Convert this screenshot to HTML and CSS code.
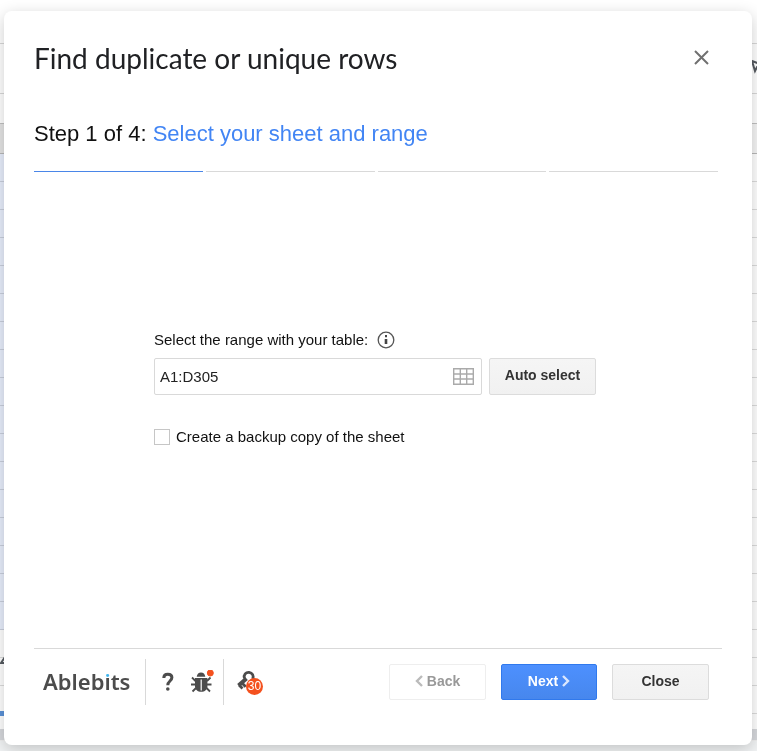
FILE: index.html
```
<!DOCTYPE html>
<html lang="en">
<head>
  <meta charset="UTF-8">
  <title>Find duplicate or unique rows</title>
  <link rel="stylesheet" href="styles.css">
</head>
<body>

  <!-- Spreadsheet behind the dialog -->
  <div class="sheet" aria-hidden="true">
    <div class="sheet-top"></div>
    <div class="sheet-toolbar">
      <svg class="cursor" width="14" height="18" viewBox="0 0 14 18" fill="none" stroke="#555a60" stroke-width="2"><path d="M1 2l3 10 2-4 6-2z"/></svg>
    </div>
    <div class="sheet-formula"></div>
    <div class="sheet-columns"></div>
    <div class="sheet-rows">
      <div class="sheet-selection"></div>
    </div>
    <div class="sheet-scroll"></div>
    <div class="sheet-tabs"></div>
    <svg class="sheet-pen" width="5" height="12" viewBox="0 0 5 12" fill="none" stroke="#555a60" stroke-width="2"><path d="M5 1L1 7h4"/></svg>
    <div class="sheet-mark"></div>
  </div>

  <!-- Dialog -->
  <div class="dialog" role="dialog" aria-labelledby="dialogTitle">
    <header class="dialog-header">
      <h1 class="dialog-title" id="dialogTitle">Find duplicate or unique rows</h1>
      <button class="close-icon" type="button" aria-label="Close dialog">
        <svg width="15" height="15" viewBox="0 0 15 15" stroke="#707070" stroke-width="2"><path d="M1 1l13 13M14 1L1 14"/></svg>
      </button>
    </header>

    <main class="dialog-body">
      <h2 class="step-title">Step 1 of 4: <span class="step-name">Select your sheet and range</span></h2>
      <div class="steps">
        <span class="step active"></span>
        <span class="step"></span>
        <span class="step"></span>
        <span class="step"></span>
      </div>

      <form class="range-form">
        <div class="label-row">
          <label for="rangeInput">Select the range with your table:</label>
          <svg width="18" height="18" viewBox="0 0 18 18"><circle cx="9" cy="9" r="7.8" fill="none" stroke="#555" stroke-width="1.3"/><path d="M8 4h2v2.2H8zM7.7 8h2.6v5H7.7z" fill="#444"/></svg>
        </div>
        <div class="range-row">
          <div class="range-box">
            <input class="range-input" type="text" id="rangeInput" value="A1:D305">
            <button class="grid-button" type="button" aria-label="Select data range">
              <svg width="21" height="17" viewBox="0 0 21 17" fill="none" stroke="#aaa" stroke-width="1.4"><path d="M.7.7h19.6v15.6H.7zM.7 6h19.6M.7 11h19.6M7.3.7v15.6M13.7.7v15.6"/></svg>
            </button>
          </div>
          <button class="button auto-select" type="button">Auto select</button>
        </div>
        <label class="backup-row">
          <input class="checkbox" type="checkbox">
          Create a backup copy of the sheet
        </label>
      </form>
    </main>

    <footer class="dialog-footer">
      <a class="logo" href="#">Ableb<span class="logo-i">i</span>ts</a>
      <div class="tools">
        <button class="tool" type="button" aria-label="Help">
          <svg width="14" height="20" viewBox="0 0 14 20" fill="none" stroke="#4c4c4c" stroke-width="3"><path d="M2.8 6C2.8 3.4 4.3 2.2 6.8 2.2c2.6 0 4.1 1.3 4.1 3.4 0 3.5-4.1 3.4-4.1 7.6"/><circle cx="6.8" cy="17" r="1.8" fill="#4c4c4c" stroke="none"/></svg>
        </button>
        <button class="tool" type="button" aria-label="Report a problem">
          <svg width="24" height="24" viewBox="0 0 24 24"><path d="M5.7 6.8C6 4 7.8 2.5 10 2.5s4 1.5 4.3 4.3z" fill="#4c4c4c"/><path d="M4 8h12.4v8.5c0 3-2.6 5.3-6.2 5.3S4 19.5 4 16.500z" fill="#4c4c4c"/><path d="M10.2 9.5v11" stroke="#fff" stroke-width="1.2"/><path d="M4.5 11L1 7.5M16 11l3.5-3.5M4.5 14.5H0M16 14.5h4.500M5 18l-3.5 3.5M15.5 18l3.5 3.5" stroke="#4c4c4c" stroke-width="1.8"/><circle cx="19.3" cy="3" r="3" fill="#f4511e" stroke="#f4511e"/></svg>
        </button>
      </div>
      <button class="tool license" type="button" aria-label="License, 30 days left">
        <svg width="20" height="24" viewBox="0 0 20 24" fill="none" stroke="#4c4c4c"><path d="M7.4 8.2a4.5 4.5 0 1 1 8.2.8" stroke-width="2.8"/><path d="M9.5 8.5L1.5 15.500" stroke-width="4"/><path d="M5.5 13.5l3.2 3.200M2 15l3.500 3.500" stroke-width="2.8"/></svg>
        <span class="badge">30</span>
      </button>

      <div class="actions">
        <button class="button back" type="button" disabled>
          <svg width="8" height="12" viewBox="0 0 8 12" fill="none" stroke="#bbb" stroke-width="2.4"><path d="M7 1L2 6l5 5"/></svg>
          Back
        </button>
        <button class="button next" type="button">
          Next
          <svg width="8" height="12" viewBox="0 0 8 12" fill="none" stroke="#dbe7fd" stroke-width="2.4"><path d="M1 1l5 5-5 5"/></svg>
        </button>
        <button class="button" type="button">Close</button>
      </div>
    </footer>
  </div>

</body>
</html>
```

FILE: styles.css
```
* {
  box-sizing: border-box;
}

body {
  margin: 0;
  padding: 11px 5px 6px 4px;
  min-height: 100vh;
  display: flex;
  font-family: "Liberation Sans", Arial, sans-serif;
  font-size: 15px;
  color: #111;
}

/* Spreadsheet */
.sheet {
  position: fixed;
  inset: 0;
  z-index: -1;
  display: flex;
  flex-direction: column;
  overflow: hidden;
}

.sheet-top,
.sheet-toolbar,
.sheet-formula,
.sheet-columns {
  flex: none;
  border-bottom: 1px solid #d8d8d8;
}

.sheet-top {
  height: 44px;
}

.sheet-toolbar {
  display: flex;
  justify-content: flex-end;
  height: 50px;
  padding-top: 15px;
}

.cursor {
  margin-right: -8px;
}

.sheet-formula {
  height: 30px;
  border-color: #c0c0c0;
}

.sheet-columns {
  height: 30px;
  background: linear-gradient(to right, #e4e4e4 50%, #f5f5f5 50%);
  border-color: #b8b8b8;
}

.sheet-rows {
  flex: 1;
  background: repeating-linear-gradient(#fff 0 27px, #dcdcdc 27px 28px);
}

.sheet-selection {
  width: 50%;
  height: 476px;
  background: rgba(80, 120, 230, 0.13);
}

.sheet-scroll {
  height: 11px;
  background: #d6d8dc;
}

.sheet-tabs {
  height: 11px;
  border-top: 1px solid #eee;
  background: #f1f3f4;
}

.sheet-pen {
  position: absolute;
  left: 0;
  bottom: 83px;
}

.sheet-mark {
  position: absolute;
  left: 0;
  bottom: 35px;
  width: 40px;
  height: 5px;
  background: #5b92d8;
}

/* Dialog */
.dialog {
  flex: 1;
  display: flex;
  flex-direction: column;
  background: #fff;
  border-radius: 8px;
  box-shadow: 0 4px 16px rgba(0, 0, 0, 0.2);
}

.dialog-header {
  display: flex;
  align-items: center;
  justify-content: space-between;
  padding: 30px 41px 0 30px;
}

.dialog-title {
  margin: 0;
  font-family: "Google Sans", Lato, sans-serif;
  font-size: 28px;
  font-weight: 400;
  line-height: 34px;
  color: #202124;
}

.close-icon,
.tool,
.grid-button {
  display: flex;
  padding: 0;
  border: none;
  background: none;
  cursor: pointer;
}

.close-icon {
  padding: 2px 2px 4px;
}

.dialog-body {
  flex: 1;
  padding: 44px 34px 0 30px;
}

.step-title {
  margin: 0;
  font-size: 22px;
  font-weight: 400;
  line-height: 30px;
}

.step-name {
  color: #4285f4;
}

.steps {
  display: grid;
  grid-template-columns: repeat(4, 1fr);
  gap: 3px;
  margin-top: 22px;
}

.step {
  height: 1px;
  background: #d9d9d9;
}

.step.active {
  background: #4a86e8;
}

.range-form {
  max-width: 444px;
  margin: 158px auto 0;
  padding-right: 2px;
}

.label-row {
  display: flex;
  align-items: center;
  gap: 9px;
  line-height: 20px;
}

.range-row {
  display: flex;
  gap: 7px;
  margin-top: 8px;
}

.range-box {
  flex: 1;
  display: flex;
  align-items: center;
  height: 37px;
  padding-right: 7px;
  border: 1px solid #d9d9d9;
  border-radius: 2px;
}

.range-input {
  flex: 1;
  min-width: 0;
  padding: 0 5px;
  border: none;
  outline: none;
  background: none;
  font: inherit;
  color: #222;
}

.backup-row {
  display: flex;
  align-items: center;
  gap: 6px;
  margin-top: 32px;
  line-height: 20px;
}

.checkbox {
  appearance: none;
  width: 16px;
  height: 16px;
  margin: 0;
  border: 1px solid #c6c6c6;
  background: #fff;
}

.checkbox:checked {
  background: #4285f4;
}

.button {
  display: flex;
  align-items: center;
  justify-content: center;
  gap: 4px;
  width: 97px;
  height: 36px;
  padding: 0 0 2px;
  border: 1px solid #dcdcdc;
  border-radius: 2px;
  background: linear-gradient(#f5f5f5, #f1f1f1);
  font-family: inherit;
  font-size: 14px;
  font-weight: bold;
  color: #333;
  cursor: pointer;
}

.auto-select {
  width: 107px;
  height: 37px;
  padding-bottom: 3px;
}

/* Footer */
.dialog-footer {
  display: flex;
  align-items: center;
  margin: 0 30px;
  padding: 10px 13px 40px 9px;
  border-top: 1px solid #d9d9d9;
}

.logo {
  width: 102px;
  padding-bottom: 2px;
  font-family: "Noto Sans", sans-serif;
  font-size: 22px;
  font-weight: 600;
  line-height: 30px;
  color: #4c4c4c;
  text-decoration: none;
}

/* blue dot of the "i" */
.logo-i {
  background: linear-gradient(#3fb4ee 11px, #4c4c4c 11px);
  background-clip: text;
  -webkit-background-clip: text;
  color: transparent;
}

.tools {
  display: flex;
  align-items: center;
  gap: 16px;
  height: 46px;
  padding: 0 8px 0 15px;
  border-left: 1px solid #d9d9d9;
  border-right: 1px solid #d9d9d9;
}

.license {
  position: relative;
  margin-left: 13px;
}

.badge {
  position: absolute;
  left: 9px;
  top: 8px;
  width: 17px;
  height: 17px;
  border-radius: 50%;
  background: #f4511e;
  font-family: "Liberation Sans", Arial, sans-serif;
  font-size: 12px;
  line-height: 17px;
  text-align: center;
  color: #fff;
}

.actions {
  display: flex;
  gap: 15px;
  margin-left: auto;
}

.back {
  border-color: #eee;
  background: #fff;
  color: #999;
}

.next {
  width: 96px;
  border-color: #3079ed;
  background: linear-gradient(#4d90fe, #4787ed);
  color: #fff;
}
```
